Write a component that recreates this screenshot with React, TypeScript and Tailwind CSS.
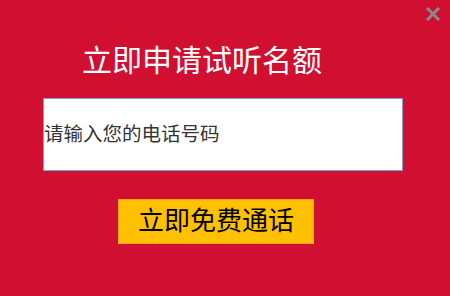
export default function App() {
  return (
    <div
      className="relative w-[450px] h-[296px] bg-[#d10f31] overflow-hidden"
      style={{ fontFamily: '"Liberation Sans", "Noto Sans CJK SC", sans-serif' }}
    >
      <button className="absolute right-[10px] top-[7px] w-[14px] h-[14px]" aria-label="close">
        <svg viewBox="0 0 14 14" className="w-[14px] h-[14px]">
          <path d="M2 2 L12 12 M12 2 L2 12" stroke="#8a8a8a" strokeWidth="3" strokeLinecap="square" />
        </svg>
      </button>

      <div className="flex flex-col">
        <h1 className="ml-[82px] mt-[42px] h-[38px] text-[30px] leading-[38px] text-white font-normal">
          立即申请试听名额
        </h1>

        <div className="ml-[43px] mt-[18px] w-[360px] h-[73px] bg-white border border-[#7f9fd6] flex items-center">
          <input
            className="w-full h-full px-0 text-[19.5px] text-[#333] placeholder:text-[#333] outline-none bg-transparent"
            placeholder="请输入您的电话号码"
          />
        </div>

        <button
          className="ml-[118px] mt-[28px] w-[196px] h-[45px] bg-[#ffc000] border border-[#f5a623] text-[26px] leading-none text-black flex items-center justify-center"
          style={{ fontFamily: '"Liberation Serif", "Noto Sans CJK SC", serif' }}
        >
          立即免费通话
        </button>
      </div>
    </div>
  );
}
